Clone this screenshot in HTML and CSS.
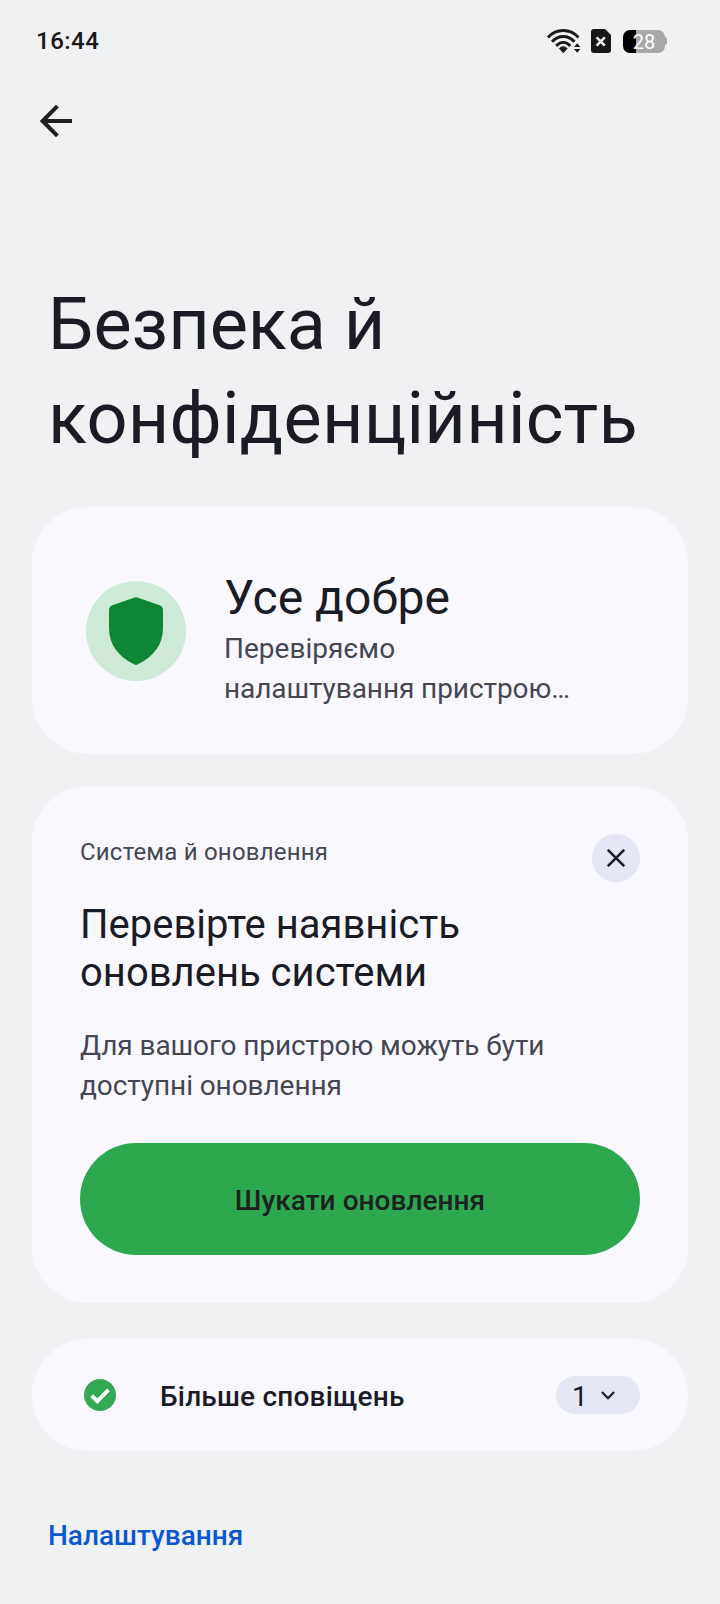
FILE: index.html
```html
<!DOCTYPE html>
<html lang="uk">
<head>
<meta charset="utf-8">
<title>Безпека й конфіденційність</title>
<link rel="stylesheet" href="styles.css">
</head>
<body>
<header class="status">
  <span class="time">16:44</span>
  <div class="status-icons">
    <svg class="wifi" width="34" height="24" viewBox="0 0 34 24" fill="none" stroke="#1a1a1a" stroke-width="2.9">
      <path d="M1 8.4C9.5-.8 23-.8 31.5 8.4"/>
      <path d="M5 12.8C11.500 5.700 21 5.700 27.500 12.800"/>
      <path d="M9.200 17C13.500 12.200 19 12.200 23.300 17"/>
      <path d="M12.300 19.500C14.500 17 18 17 20.200 19.500L16.250 23.800Z" fill="#1a1a1a" stroke-width=".8"/>
      <path d="M27 18 30.200 14.300 33.400 18ZM27 20 30.200 23.700 33.400 20Z" fill="#1a1a1a" stroke="none"/>
    </svg>
    <svg class="sim" width="20" height="24" viewBox="0 0 20 24">
      <path d="M3 0H14L20 6V21Q20 24 17 24H3Q0 24 0 21V3Q0 0 3 0Z" fill="#171819"/>
      <path d="M5.600 8.400 13.800 16.600M13.800 8.400 5.600 16.600" stroke="#f0f1f3" stroke-width="2.600"/>
    </svg>
    <div class="battery"><span>28</span></div>
    <div class="battery-tip"></div>
  </div>
</header>
<nav class="toolbar">
  <svg width="34" height="34" viewBox="0 0 34 34" fill="none" stroke="#1f1f1f" stroke-width="4"><path d="M32 17H4M17.400 2.100 2.600 17 17.400 31.900"/></svg>
</nav>
<main>
  <h1 class="title">Безпека й<br><span class="title-long">конфіденційність</span></h1>
  <section class="card summary">
    <div class="shield">
      <svg width="54" height="68" viewBox="0 0 54 68"><path d="M25 .7Q27-.3 29 .7L50.500 8.200Q54 9.500 54 13V31C54 48 44.500 59.500 29 67.300Q27 68.400 25 67.300C9.500 59.500 0 48 0 31V13Q0 9.500 3.500 8.200Z" fill="#0f8635"/></svg>
    </div>
    <div>
      <h2 class="summary-title">Усе добре</h2>
      <p class="body">Перевіряємо<br><span class="tight">налаштування пристрою…</span></p>
    </div>
  </section>
  <section class="card issue">
    <div class="issue-head">
      <span class="label">Система й оновлення</span>
      <button class="close" aria-label="Закрити">
        <svg width="18" height="18" viewBox="0 0 18 18"><path d="M.800.800 17.200 17.200M17.200.800.800 17.200" stroke="#1a1b25" stroke-width="2.500"/></svg>
      </button>
    </div>
    <h3 class="issue-title">Перевірте наявність<br>оновлень системи</h3>
    <p class="body tight">Для вашого пристрою можуть бути<br>доступні оновлення</p>
    <button class="action">Шукати оновлення</button>
  </section>
  <section class="card more">
    <svg width="32" height="32" viewBox="0 0 32 32"><circle cx="16" cy="16" r="16" fill="#34a853"/><path d="M7.700 16.600 13.300 22.200 24.500 10.800" fill="none" stroke="#fff" stroke-width="3.800"/></svg>
    <span class="more-label">Більше сповіщень</span>
    <div class="count">
      <span>1</span>
      <svg width="14" height="9" viewBox="0 0 14 9"><path d="M.900 1.100 7 7.200 13.100 1.100" fill="none" stroke="#1a1b25" stroke-width="2.100"/></svg>
    </div>
  </section>
  <h4 class="category">Налаштування</h4>
</main>
</body>
</html>
```
FILE: styles.css
```css
* { box-sizing: border-box; }
body { margin: 0; background: #eff1f3; color: #1a1b25; font-family: Roboto, sans-serif; height: 1604px; overflow: hidden; }
h1, h2, h3, h4, p { margin: 0; font-weight: 400; white-space: nowrap; }
button { border: 0; padding: 0; font: inherit; color: inherit; }
svg { display: block; flex: none; }
.status { height: 82px; padding: 0 53px 0 36px; display: flex; justify-content: space-between; align-items: center; }
.time { font-size: 24px; font-weight: 500; letter-spacing: .5px; color: #171819; }
.status-icons { display: flex; align-items: center; }
.sim { margin: 0 12px 0 10px; }
.battery { width: 42px; height: 23px; border-radius: 7px; background: linear-gradient(90deg, #000 13px, #a8a8a8 13px); color: #fff; font-size: 20px; line-height: 24px; text-align: center; }
.battery-tip { width: 2px; height: 8px; border-radius: 0 2px 2px 0; background: #a8a8a8; }
.toolbar { height: 78px; padding: 22px 40px; }
.title { margin: 118px 48px 0; font-size: 72px; line-height: 94px; }
.title-long { letter-spacing: .25px; }
.card { margin: 0 32px; border-radius: 56px; background: #f9f8ff; }
.summary { height: 247px; margin-top: 41px; padding: 56px 54px; display: flex; gap: 38px; }
.shield { flex: none; width: 100px; height: 100px; margin-top: 18px; border-radius: 50%; background: #ceead6; display: grid; place-items: center; }
.summary-title { font-size: 48px; line-height: 63px; margin-top: 3px; }
.body { font-size: 28px; line-height: 40px; color: #454653; }
.tight { letter-spacing: -.08px; }
.issue { height: 517px; margin-top: 32px; padding: 48px; }
.issue-head { display: flex; justify-content: space-between; height: 48px; }
.label { font-size: 24px; line-height: 36px; letter-spacing: .2px; color: #454653; }
.close { width: 48px; height: 48px; border-radius: 50%; background: #e4e7f4; display: grid; place-items: center; }
.issue-title { margin-top: 19px; font-size: 40px; line-height: 48px; }
.issue .body { margin-top: 29px; }
.action { display: block; width: 100%; height: 112px; margin-top: 37px; padding-top: 2px; border-radius: 56px; background: #2ea84f; color: #1b2320; font-size: 28px; font-weight: 500; letter-spacing: .04px; }
.more { height: 112px; margin-top: 36px; padding: 0 48px 0 52px; display: flex; align-items: center; }
.more-label { flex: 1; margin-left: 44px; padding-top: 3px; font-size: 28px; font-weight: 500; letter-spacing: .2px; }
.count { width: 84px; height: 38px; padding: 0 25px 0 16px; border-radius: 19px; background: #e4e7f4; display: flex; align-items: center; justify-content: space-between; font-size: 28px; }
.count span { padding-top: 2px; }
.category { margin: 65px 48px 0; font-size: 28px; line-height: 40px; font-weight: 500; color: #0b57d0; }
```
